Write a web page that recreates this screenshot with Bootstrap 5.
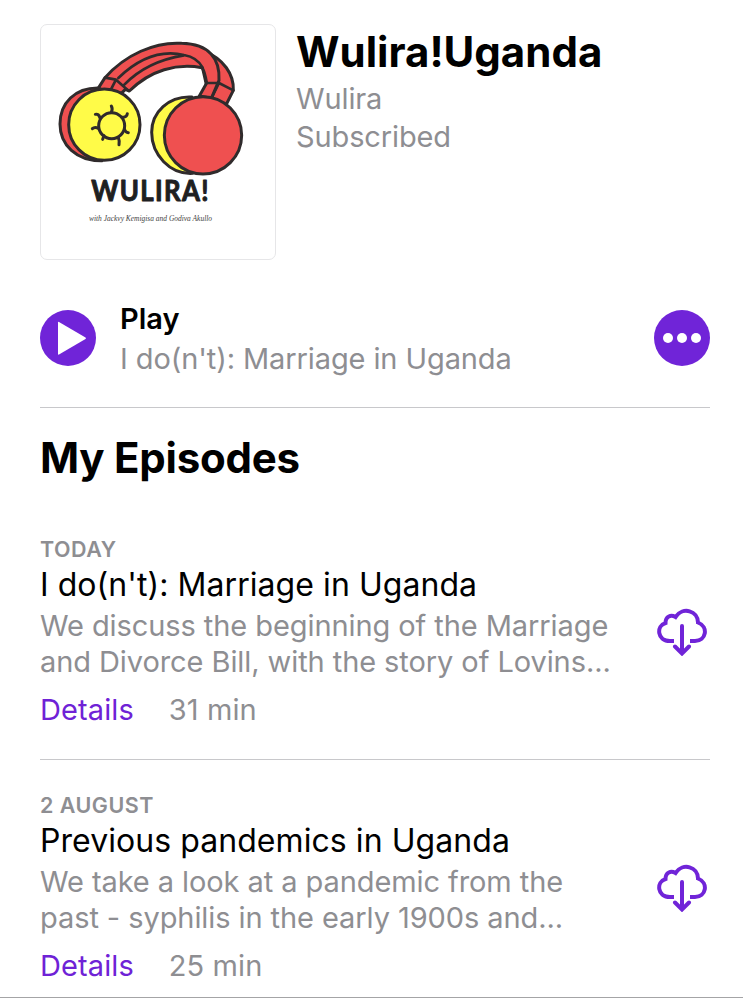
<!DOCTYPE html>
<html lang="en">
<head>
<meta charset="utf-8">
<meta name="viewport" content="width=device-width, initial-scale=1">
<title>Wulira!Uganda</title>
<link href="https://cdn.jsdelivr.net/npm/bootstrap@5.3.0/dist/css/bootstrap.min.css" rel="stylesheet">
<style>
body{font-family:Inter,"Liberation Sans",sans-serif;color:#000;background:#fff;overflow:hidden}
.screen{height:998px;padding:24px 33px 0 40px;border-bottom:1px solid #a4a4a6}
.cover{width:236px;height:236px;border:1px solid #e6e6e8;border-radius:7px;overflow:hidden}
.cover svg{width:236px;height:236px;margin:-1px}
.show-info{margin-left:20px}
.grey{color:#8e8e92}
.violet{color:#6f22d6}
.show-name{font-size:42px;line-height:50px;font-weight:700;letter-spacing:0;margin:3px 0}
.copy{font-size:29px;line-height:38px;letter-spacing:-.12px}
.play-row{margin-top:38px;height:110px;border-bottom:1px solid #c8c8cb;padding-bottom:29px}
.play-text{margin-left:24px;padding-top:2px}
.play-name{font-size:29px;line-height:40px;font-weight:600}
.play-sub{letter-spacing:-.1px;line-height:40px}
.section-name{font-size:42px;line-height:50px;font-weight:700;letter-spacing:-.25px;margin:25px 0 0}
.episode{height:256px;padding-top:32px}
.first{margin-top:21px;border-bottom:1px solid #c8c8cb}
.date{font-size:21.5px;line-height:26px;font-weight:600;letter-spacing:.5px}
.ep-name{font-size:32px;line-height:40px;margin-top:3px;letter-spacing:.06px}
.desc{line-height:36px;margin-top:3px;letter-spacing:-.08px}
.meta{line-height:36px;margin-top:12px;gap:35px;letter-spacing:.1px}
.cloud{width:50px;height:48px;margin-right:3px;margin-top:72px}
</style>
</head>
<body>
<main class="screen">
<header class="d-flex">
<div class="cover flex-shrink-0">
<svg viewBox="12 12 708 708" fill="none" stroke="#302b2c" stroke-width="9" stroke-linejoin="round" stroke-linecap="round" role="img" aria-label="Headphones">
<path fill="#ef5050" d="M500 92C565 116 594 165 592 211L570 255L522 242L500 145Z"/>
<path fill="#ef5050" d="M186 206L207 173C268 104 356 65 437 70C520 72 552 116 549 181L526 235L490 228L512 189C508 166 505 151 498 143C422 129 344 150 280 213L268 208L256 220Z"/>
<path d="M247 174C304 119 371 88 444 105C473 110 490 124 500 143M265 194C306 151 363 119 444 106M207 173L240 179L275 210M240 179L223 212M512 189H549L592 211M549 189L526 235" stroke-width="8"/>
<path fill="#ef5050" d="M190 204C116 202 72 250 72 312C72 375 121 423 198 422Z"/>
<circle cx="205" cy="314" r="107" fill="#fffb48"/>
<circle cx="227" cy="317" r="39"/>
<path d="M226 277Q231 267 226 258M258 292Q273 292 274 281M266 329Q269 337 277 338M247 352Q251 362 249 374M204 347L200 358M188 325Q176 319 169 326M192 294Q188 280 178 283"/>
<path fill="#fffb48" d="M468 231C398 227 347 276 347 337C347 404 402 464 470 460Z"/>
<circle cx="501" cy="346" r="116" fill="#ef5050"/>
<g stroke="none" fill="#1e2021">
<text transform="translate(166 542) scale(.9 1)" font-family="Lato,sans-serif" font-weight="700" font-size="86" textLength="391" lengthAdjust="spacing" stroke="#1e2021" stroke-width="3">WULIRA!</text>
<text x="159" y="604" font-family="'Liberation Serif',serif" font-style="italic" font-size="25" textLength="369" lengthAdjust="spacingAndGlyphs" fill="#444">with Jackvy Kemigisa and Godiva Akullo</text>
</g>
</svg>
</div>
<div class="show-info">
<h1 class="show-name">Wulira!Uganda</h1>
<div class="copy grey">Wulira</div>
<div class="copy grey">Subscribed</div>
</div>
</header>
<section class="play-row d-flex align-items-center">
<svg width="56" height="56" viewBox="0 0 56 56" class="flex-shrink-0"><circle cx="28" cy="28" r="28" fill="#7024d8"/><path d="M18 12.5V44Q18 45 19 44.5L45.5 29Q46.5 28 45.5 27.4L19 12Q18 11.5 18 12.5Z" fill="#fff"/></svg>
<div class="play-text flex-grow-1"><div class="play-name">Play</div><div class="copy grey play-sub">I do(n't): Marriage in Uganda</div></div>
<svg width="56" height="56" viewBox="0 0 56 56" class="flex-shrink-0"><circle cx="28" cy="28" r="28" fill="#7024d8"/><g fill="#fff"><circle cx="14" cy="28" r="5"/><circle cx="28" cy="28" r="5"/><circle cx="42" cy="28" r="5"/></g></svg>
</section>
<h2 class="section-name">My Episodes</h2>
<article class="episode first d-flex justify-content-between">
<div class="text-nowrap">
<div class="date grey">TODAY</div>
<h3 class="ep-name mb-0 fw-normal">I do(n't): Marriage in Uganda</h3>
<div class="copy desc grey">We discuss the beginning of the Marriage<br>and Divorce Bill, with the story of Lovins...</div>
<div class="copy meta d-flex"><a class="violet text-decoration-none" href="#">Details</a><span class="grey">31 min</span></div>
</div>
<svg class="cloud flex-shrink-0" viewBox="1 0 50 48" fill="none" stroke="#7024d8" stroke-width="4"><path d="M18 33H14C1 33 0 18 9.500 15C9.500 8 15 6.500 19.500 9C27-2 42 3 42 14.500C53 19 50 33 39 33H34"/><path d="M26 18V45M19 38.500L26 45.500L33 38.500" stroke-linecap="round"/></svg>
</article>
<article class="episode d-flex justify-content-between">
<div class="text-nowrap">
<div class="date grey">2 AUGUST</div>
<h3 class="ep-name mb-0 fw-normal">Previous pandemics in Uganda</h3>
<div class="copy desc grey">We take a look at a pandemic from the<br>past - syphilis in the early 1900s and...</div>
<div class="copy meta d-flex"><a class="violet text-decoration-none" href="#">Details</a><span class="grey">25 min</span></div>
</div>
<svg class="cloud flex-shrink-0" viewBox="1 0 50 48" fill="none" stroke="#7024d8" stroke-width="4"><path d="M18 33H14C1 33 0 18 9.500 15C9.500 8 15 6.500 19.500 9C27-2 42 3 42 14.500C53 19 50 33 39 33H34"/><path d="M26 18V45M19 38.500L26 45.500L33 38.500" stroke-linecap="round"/></svg>
</article>
</main>
<script src="https://cdn.jsdelivr.net/npm/bootstrap@5.3.0/dist/js/bootstrap.bundle.min.js"></script>
</body>
</html>
